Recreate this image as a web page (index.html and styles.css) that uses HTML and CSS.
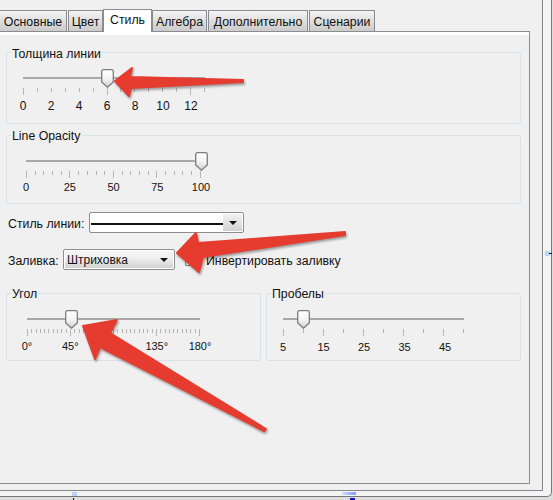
FILE: index.html
```html
<!DOCTYPE html>
<html lang="ru">
<head>
    <meta charset="UTF-8">
    <title>Свойства</title>
    <link rel="stylesheet" href="styles.css">
</head>
<body>

    <!-- thumb used by all sliders -->
    <svg class="defs" width="0" height="0">
        <defs>
            <linearGradient id="thumbFill" x1="0" y1="0" x2="0" y2="1">
                <stop offset="0" stop-color="#ffffff"/>
                <stop offset="0.5" stop-color="#f4f4f4"/>
                <stop offset="1" stop-color="#cfcfcf"/>
            </linearGradient>
            <symbol id="thumb" viewBox="0 0 13 19">
                <path d="M2.5 .7H10.5Q12.3 .7 12.3 2.5V13L6.5 18.2L.7 13V2.5Q.7 .7 2.5 .7Z" fill="url(#thumbFill)" stroke="#7c7c7c" stroke-width="1.3"/>
            </symbol>
        </defs>
    </svg>

    <div class="window">
        <div class="dialog">
            <div class="tab-area">
                <div class="tabs">
                    <div class="tab tab-first">Основные</div>
                    <div class="tab tab-color">Цвет</div>
                    <div class="tab tab-active">Стиль</div>
                    <div class="tab tab-algebra">Алгебра</div>
                    <div class="tab tab-extra">Дополнительно</div>
                    <div class="tab tab-scripts">Сценарии</div>
                </div>

                <div class="panel">
                    <!-- Line thickness -->
                    <div class="group group-thick">
                        <span class="group-title">Толщина линии</span>
                        <div class="slider slider-thick">
                            <div class="track"></div>
                            <svg class="thumb" style="left:46.15%"><use href="#thumb"/></svg>
                            <div class="ticks">
                                <i class="major"></i><i></i><i></i><i></i><i></i><i></i><i class="major"></i>
                                <i></i><i></i><i></i><i></i><i></i><i class="major"></i><i></i>
                            </div>
                            <div class="labels labels-big">
                                <span>0</span><span>2</span><span>4</span><span>6</span><span>8</span><span>10</span><span>12</span>
                            </div>
                        </div>
                    </div>

                    <!-- Line opacity -->
                    <div class="group group-opacity">
                        <span class="group-title">Line Opacity</span>
                        <div class="slider slider-opacity">
                            <div class="track"></div>
                            <svg class="thumb" style="left:100%"><use href="#thumb"/></svg>
                            <div class="ticks">
                                <i class="major"></i><i></i><i></i><i></i><i></i>
                                <i class="major"></i><i></i><i></i><i></i><i></i>
                                <i class="major"></i><i></i><i></i><i></i><i></i>
                                <i class="major"></i><i></i><i></i><i></i><i></i>
                                <i class="major"></i>
                            </div>
                            <div class="labels">
                                <span>0</span><span>25</span><span>50</span><span>75</span><span>100</span>
                            </div>
                        </div>
                    </div>

                    <div class="form-row row-line">
                        <label class="row-label">Стиль линии:</label>
                        <div class="combo combo-line">
                            <div class="combo-value"><div class="line-sample"></div></div>
                            <div class="combo-button"><b class="caret"></b></div>
                        </div>
                    </div>

                    <div class="form-row row-fill">
                        <label class="row-label">Заливка:</label>
                        <div class="combo combo-fill">
                            <span class="combo-text">Штриховка</span>
                            <b class="caret"></b>
                        </div>
                        <span class="checkbox"></span>
                        <label class="check-label">Инвертировать заливку</label>
                    </div>

                    <div class="group-pair">
                        <!-- Hatch angle -->
                        <div class="group group-angle">
                            <span class="group-title">Угол</span>
                            <div class="slider slider-angle">
                                <div class="track"></div>
                                <svg class="thumb" style="left:25.5%"><use href="#thumb"/></svg>
                                <div class="ticks">
                                    <i class="major"></i><i></i><i></i><i></i><i></i><i></i><i></i><i></i><i></i><i></i>
                                    <i class="major"></i><i></i><i></i><i></i><i></i><i></i><i></i><i></i><i></i><i></i>
                                    <i class="major"></i><i></i><i></i><i></i><i></i><i></i><i></i><i></i><i></i><i></i>
                                    <i class="major"></i><i></i><i></i><i></i><i></i><i></i><i></i><i></i><i></i><i></i>
                                    <i class="major"></i>
                                </div>
                                <div class="labels labels-low">
                                    <span>0°</span><span>45°</span><span>90°</span><span>135°</span><span>180°</span>
                                </div>
                            </div>
                        </div>

                        <!-- Hatch spacing -->
                        <div class="group group-gap">
                            <span class="group-title">Пробелы</span>
                            <div class="slider slider-gap">
                                <div class="track"></div>
                                <svg class="thumb" style="left:11.1%"><use href="#thumb"/></svg>
                                <div class="ticks">
                                    <i class="major"></i><i></i><i class="major"></i><i></i><i class="major"></i>
                                    <i></i><i class="major"></i><i></i><i class="major"></i><i></i>
                                </div>
                                <div class="labels labels-gap">
                                    <span>5</span><span>15</span><span>25</span><span>35</span><span>45</span>
                                </div>
                            </div>
                        </div>
                    </div>
                </div>
            </div>
        </div>
    </div>

    <!-- bits of the drawing behind the dialog -->
    <span class="speck speck-right"></span>
    <span class="speck speck-bottom-a"></span>
    <span class="speck speck-bottom-b"></span>

    <!-- red annotation arrows on top of the screenshot -->
    <svg class="arrows" width="553" height="500" viewBox="0 0 553 500">
        <polygon points="115,81 132,68 130,77 243,80 243,82 131,88 129,96"/>
        <polygon points="177,253 196,233 198,243 345,232 345,235 203,257 199,272"/>
        <polygon points="83,326 117,320 110,333 266,429 264,431 100,347 95,359"/>
    </svg>

</body>
</html>
```

FILE: styles.css
```css
/* General Styles */
body {
    margin: 0;
    width: 553px;
    height: 500px;
    overflow: hidden;
    position: relative;
    background: #dcdcdc;
    font-family: "Liberation Sans", Arial, sans-serif;
    font-size: 12.3px;
    color: #111;
}

.defs {
    position: absolute;
}

/* Window frames */
.window {
    width: 552px;
    height: 497px;
    box-sizing: border-box;
    background: #f4f4f4;
    border-right: 1px solid #77777c;
    border-bottom: 1px solid #77777c;
    border-bottom-right-radius: 5px;
}

.dialog {
    width: 543px;
    height: 491px;
    box-sizing: border-box;
    background: #f0f0f0;
    border-right: 1px solid #85858a;
    border-bottom: 1px solid #85858a;
}

.tab-area {
    width: 530px;
    height: 484px;
    display: flex;
    flex-direction: column;
}

/* Tabs */
.tabs {
    height: 31px;
    flex: none;
    display: flex;
    align-items: flex-end;
}

.tab {
    height: 19px;
    padding-top: 1px;
    line-height: 21px;
    text-align: center;
    background: linear-gradient(#f4f4f4, #dcdcdc 55%, #cbcbcb);
    border: 1px solid #8b8b90;
    border-bottom: none;
    margin-right: 1px;
}

.tab-first {
    width: 66px;
    border-left: none;
}

.tab-color {
    width: 33px;
}

.tab-active {
    width: 47px;
    height: 22px;
    padding-top: 0;
    line-height: 21px;
    margin: 0 0 -1px -1px;
    background: #fff;
    position: relative;
    z-index: 1;
}

.tab-algebra {
    width: 53px;
}

.tab-extra {
    width: 98px;
}

.tab-scripts {
    width: 64px;
}

/* Tab panel */
.panel {
    flex: 1;
    box-sizing: border-box;
    background: #f0f0f0;
    border-top: 1px solid #8b8b90;
    border-right: 1px solid #8b8b90;
    border-bottom: 1px solid #8b8b90;
    box-shadow: inset 0 3px 0 #fff;
    padding: 20px 8px 0 6px;
}

/* Titled groups */
.group {
    position: relative;
    box-sizing: border-box;
    border: 1px solid #d9e1e8;
    border-radius: 3px;
}

.group-title {
    position: absolute;
    top: -7px;
    left: 4px;
    padding: 0 1px;
    background: #f0f0f0;
    line-height: 15px;
}

.group-thick {
    height: 72px;
    margin-bottom: 11px;
}

.group-thick .group-title {
    top: -6px;
}

.group-opacity {
    height: 69px;
}

.group-pair {
    display: flex;
    gap: 5px;
    margin-top: 23px;
}

.group-angle {
    width: 255px;
    height: 68px;
}

.group-gap {
    flex: 1;
    height: 68px;
}

/* Sliders */
.slider {
    position: relative;
}

.slider-thick {
    width: 182px;
    margin: 24px 0 0 16px;
}

.slider-opacity {
    width: 175px;
    margin: 24px 0 0 19px;
}

.slider-angle {
    width: 173px;
    margin: 24px 0 0 20px;
}

.slider-gap {
    width: 181px;
    margin: 24px 0 0 16px;
}

.track {
    height: 2px;
    background: #a9a9a9;
}

.thumb {
    position: absolute;
    top: -8px;
    width: 13px;
    height: 19px;
    margin-left: -6px;
}

.ticks {
    display: flex;
    justify-content: space-between;
    align-items: flex-start;
    height: 7px;
    margin-top: 9px;
}

.ticks i {
    display: block;
    width: 1px;
    height: 4px;
    background: #b5b5b5;
}

.ticks .major {
    height: 7px;
}

.labels {
    display: flex;
    justify-content: space-between;
    margin-top: 3px;
    font-size: 11px;
    line-height: 13px;
}

.labels span {
    width: 0;
    display: flex;
    justify-content: center;
    white-space: nowrap;
}

.labels-big {
    width: 168px;
    font-size: 12px;
    margin-top: 5px;
}

.labels-low {
    margin-top: 4px;
}

.labels-gap {
    width: 162px;
    margin-top: 5px;
}

/* Form rows */
.form-row {
    display: flex;
    align-items: center;
    height: 21px;
    margin-left: 2px;
}

.row-line {
    margin-top: 8px;
}

.row-fill {
    margin-top: 16px;
}

.row-label {
    white-space: nowrap;
    padding-top: 3px;
}

/* Combo boxes */
.combo {
    box-sizing: border-box;
    height: 21px;
    border: 1px solid #8e8e8e;
    border-radius: 2px;
    display: flex;
    align-items: center;
}

.combo-line {
    position: absolute;
    left: 89px;
    width: 155px;
    background: #fff;
    padding: 1px;
}

.combo-value {
    width: 132px;
    height: 100%;
    display: flex;
    align-items: center;
}

.line-sample {
    width: 100%;
    height: 0;
    margin-top: 3px;
    border-top: 2px solid #111;
}

.combo-button {
    flex: 1;
    height: 100%;
    display: flex;
    align-items: center;
    justify-content: center;
    background: linear-gradient(#f2f2f2, #d2d2d2);
}

.combo-fill {
    position: absolute;
    left: 63px;
    width: 112px;
    padding: 0 6px 0 3px;
    justify-content: space-between;
    background: linear-gradient(#f6f6f6, #f0f0f0 40%, #d0d0d0);
    box-shadow: inset 0 0 0 1px #fff;
}

.combo-text {
    font-size: 12px;
    padding-top: 1px;
}

.caret {
    display: block;
    width: 0;
    height: 0;
    border-left: 4px solid transparent;
    border-right: 4px solid transparent;
    border-top: 4px solid #111;
}

.checkbox {
    position: absolute;
    left: 185px;
    width: 11px;
    height: 11px;
    border: 1px solid #8e8e8e;
    background: linear-gradient(#e4e4e4, #f6f6f6);
}

.check-label {
    position: absolute;
    left: 206px;
    white-space: nowrap;
    padding-top: 3px;
}

/* Specks of the drawing behind */
.speck {
    position: absolute;
    background: #bcd4f8;
}

.speck::after {
    content: "";
    position: absolute;
    background: #111;
}

.speck-right {
    left: 545px;
    top: 251px;
    width: 5px;
    height: 5px;
}

.speck-right::after {
    left: 4px;
    top: 2px;
    width: 3px;
    height: 1px;
}

.speck-bottom-a {
    left: 72px;
    top: 492px;
    width: 5px;
    height: 4px;
}

.speck-bottom-a::after {
    left: 1px;
    top: 6px;
    width: 1px;
    height: 3px;
}

.speck-bottom-b {
    left: 342px;
    top: 492px;
    width: 14px;
    height: 3px;
    background: linear-gradient(90deg, #d3def8, #7f9cf0);
}

.speck-bottom-b::after {
    left: 8px;
    top: 6px;
    width: 5px;
    height: 3px;
    background: #1414b4;
}

/* Annotation arrows */
.arrows {
    position: absolute;
    left: 0;
    top: 0;
    pointer-events: none;
    filter: drop-shadow(1px 2px 1px rgba(0, 0, 0, 0.35));
}

.arrows polygon {
    fill: #e63c30;
    stroke: #e63c30;
    stroke-width: 2;
    stroke-linejoin: round;
}
```
